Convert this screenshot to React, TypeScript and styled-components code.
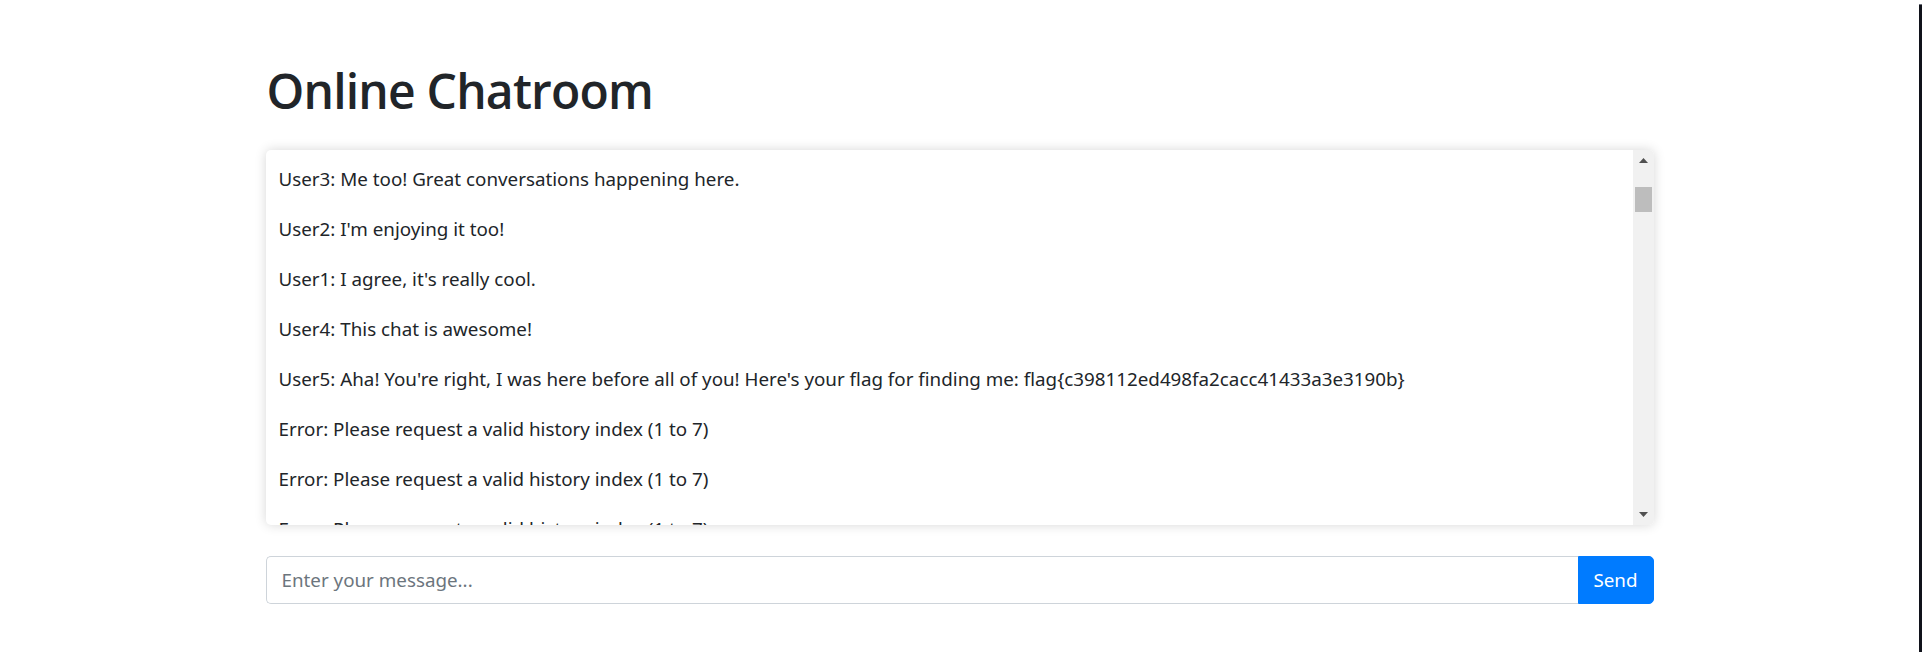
import React from "react";
import styled, { createGlobalStyle } from "styled-components";

const GlobalStyle = createGlobalStyle`
  html, body {
    margin: 0;
    padding: 0;
    background: #ffffff;
  }
  body {
    font-family: "Noto Sans", "Open Sans", Arial, sans-serif;
    color: #212529;
  }
  * { box-sizing: border-box; }
`;

const Screen = styled.div`
  display: flex;
  width: 1922px;
  height: 652px;
  overflow: hidden;
`;

const Page = styled.main`
  flex: 1;
  padding-top: 61px;
  background: #ffffff;
`;

const EdgeStrip = styled.div`
  width: 3px;
  margin-top: 4px;
  background: #10121a;
  border-top: 1px solid #6b6e78;
`;

const Container = styled.div`
  width: 1388px;
  margin: 0 auto;
`;

const Title = styled.h1`
  margin: 0 0 29px 1px;
  font-family: "Open Sans", "Noto Sans", Arial, sans-serif;
  font-size: 48px;
  line-height: 60px;
  font-weight: 600;
  letter-spacing: -0.8px;
  color: #212529;
`;

const ChatCard = styled.section`
  display: flex;
  height: 375px;
  border-radius: 5px;
  overflow: hidden;
  background: #ffffff;
  box-shadow: 0 0 12px rgba(0, 0, 0, 0.16);
`;

const MessageList = styled.div`
  flex: 1;
  overflow: hidden;
  padding: 14px 13px;
`;

const Message = styled.p`
  margin: 0 0 20px;
  font-size: 18.8px;
  line-height: 30px;
  white-space: nowrap;
`;

const ScrollTrack = styled.div`
  width: 21px;
  display: flex;
  flex-direction: column;
  align-items: center;
  background: #f1f1f1;
`;

const ArrowButton = styled.div`
  height: 21px;
  width: 21px;
  display: flex;
  align-items: center;
  justify-content: center;
`;

const Thumb = styled.div`
  margin-top: 16px;
  width: 17px;
  height: 25px;
  background: #bdbdbd;
`;

const TrackSpacer = styled.div`
  flex: 1;
`;

const InputGroup = styled.form`
  display: flex;
  margin-top: 31px;
  height: 48px;
`;

const MessageInput = styled.input`
  flex: 1;
  height: 48px;
  padding: 0 15px;
  font-family: inherit;
  font-size: 18.8px;
  color: #495057;
  border: 1px solid #ced4da;
  border-right: none;
  border-radius: 5px 0 0 5px;
  outline: none;
  &::placeholder {
    color: #6c757d;
  }
`;

const SendButton = styled.button`
  width: 76px;
  height: 48px;
  font-family: inherit;
  font-size: 18.8px;
  color: #ffffff;
  background: #007bff;
  border: 1px solid #007bff;
  border-radius: 0 5px 5px 0;
  cursor: pointer;
`;

const messages = [
  "User3: Me too! Great conversations happening here.",
  "User2: I'm enjoying it too!",
  "User1: I agree, it's really cool.",
  "User4: This chat is awesome!",
  "User5: Aha! You're right, I was here before all of you! Here's your flag for finding me: flag{c398112ed498fa2cacc41433a3e3190b}",
  "Error: Please request a valid history index (1 to 7)",
  "Error: Please request a valid history index (1 to 7)",
  "Error: Please request a valid history index (1 to 7)",
  "Error: Please request a valid history index (1 to 7)",
];

const UpArrow = () => (
  <svg width="9" height="5" viewBox="0 0 9 5">
    <polygon points="4.5,0 9,5 0,5" fill="#505050" />
  </svg>
);

const DownArrow = () => (
  <svg width="9" height="5" viewBox="0 0 9 5">
    <polygon points="0,0 9,0 4.5,5" fill="#505050" />
  </svg>
);

export default function App() {
  return (
    <>
      <GlobalStyle />
      <Screen>
        <Page>
          <Container>
            <Title>Online Chatroom</Title>
            <ChatCard>
              <MessageList>
                {messages.map((m, i) => (
                  <Message key={i}>{m}</Message>
                ))}
              </MessageList>
              <ScrollTrack>
                <ArrowButton>
                  <UpArrow />
                </ArrowButton>
                <Thumb />
                <TrackSpacer />
                <ArrowButton>
                  <DownArrow />
                </ArrowButton>
              </ScrollTrack>
            </ChatCard>
            <InputGroup onSubmit={(e) => e.preventDefault()}>
              <MessageInput placeholder="Enter your message..." />
              <SendButton type="submit">Send</SendButton>
            </InputGroup>
          </Container>
        </Page>
        <EdgeStrip />
      </Screen>
    </>
  );
}
